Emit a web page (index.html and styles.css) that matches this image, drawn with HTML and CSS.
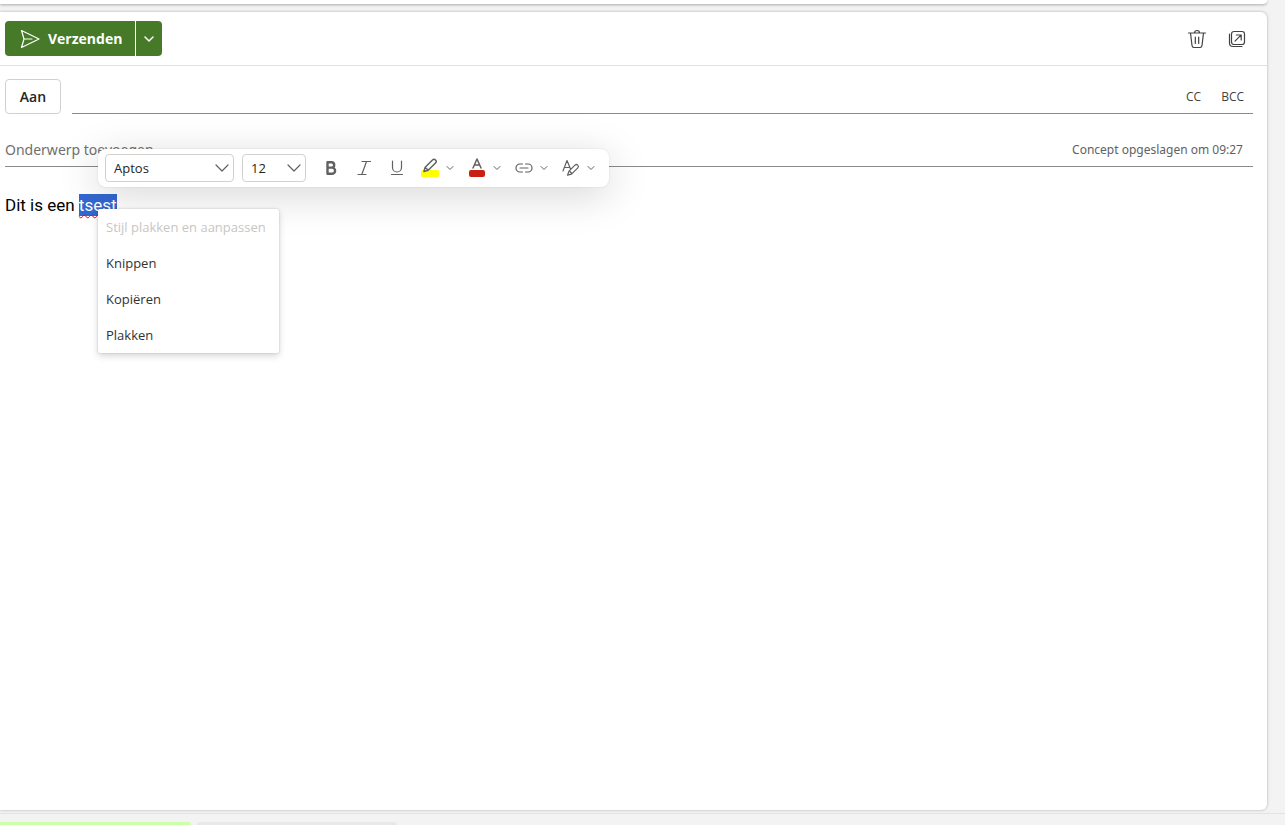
FILE: index.html
```html
<!DOCTYPE html>
<html lang="nl">
  <head>
    <meta charset="UTF-8" />
    <meta name="viewport" content="width=device-width, initial-scale=1.0" />
    <title>Nieuw bericht</title>
    <link rel="stylesheet" href="styles.css">
  </head>
  <body>
    <!-- bottom edge of the ribbon -->
    <div class="ribbon"></div>

    <main class="compose">
      <header class="compose-header">
        <div class="send-group">
          <button type="button" class="send">
            <svg width="20" height="20" viewBox="0 0 20 20"><path d="M1.500 1.500 19 10 1.500 18.500 4 10ZM4.500 10H12" /></svg>
            Verzenden
          </button>
          <button type="button" class="send-more" aria-label="Meer verzendopties">
            <svg width="10" height="10" viewBox="0 0 10 10"><path d="m1 3 4 4 4-4" /></svg>
          </button>
        </div>
        <div class="header-actions">
          <button type="button" class="icon-button" aria-label="Verwijderen">
            <svg width="20" height="20" viewBox="0 0 20 20"><path d="M1.500 4H18.500M7.500 4a2.500 2.500 0 0 1 5 0M3.500 4 5 16.500Q5.200 18.500 7 18.500H13Q14.800 18.500 15 16.500L16.500 4M8.300 8V14.500M11.700 8V14.500" /></svg>
          </button>
          <button type="button" class="icon-button" aria-label="Openen in nieuw venster">
            <svg width="20" height="20" viewBox="0 0 20 20"><rect x="4.500" y="2.500" width="13" height="13" rx="2.500" /><path d="M2.500 5V14a3.500 3.500 0 0 0 3.500 3.500H15M8 12.200 14 6.200M9.300 6H14.200V11" /></svg>
          </button>
        </div>
      </header>

      <div class="to-row">
        <button type="button" class="to-button">Aan</button>
        <div class="to-field">
          <input type="text" aria-label="Aan" />
          <button type="button">CC</button>
          <button type="button">BCC</button>
        </div>
      </div>

      <div class="subject-row">
        <input type="text" placeholder="Onderwerp toevoegen" aria-label="Onderwerp toevoegen" />
        <span>Concept opgeslagen om 09:27</span>
      </div>

      <div class="message">
        <p>Dit is een <span class="selected">tsest</span></p>
      </div>

      <!-- floating format bar -->
      <div class="format-bar">
        <div class="dropdown font-name">
          <select aria-label="Lettertype"><option>Aptos</option></select>
          <svg width="14" height="14" viewBox="0 0 14 14"><path d="m1 4 6 6 6-6" /></svg>
        </div>
        <div class="dropdown font-size">
          <select aria-label="Tekengrootte"><option>12</option></select>
          <svg width="14" height="14" viewBox="0 0 14 14"><path d="m1 4 6 6 6-6" /></svg>
        </div>
        <div class="format-buttons">
          <button type="button" aria-label="Vet">
            <svg class="bold" width="20" height="20" viewBox="0 0 20 20"><path d="M6.500 4.200H10.500a2.700 2.700 0 0 1 0 5.400H6.500ZM6.500 9.600H11a3.100 3.100 0 0 1 0 6.200H6.500Z" /></svg>
          </button>
          <button type="button" aria-label="Cursief">
            <svg width="20" height="20" viewBox="0 0 20 20"><path d="M8 3.500H16.500M4 16.500H12M12.500 3.500 7.800 16.500" /></svg>
          </button>
          <button type="button" aria-label="Onderstrepen">
            <svg width="20" height="20" viewBox="0 0 20 20"><path d="M5.500 3V9.500a4.500 4.500 0 0 0 9 0V3M4.500 16.500H15.500" /></svg>
          </button>
          <button type="button" class="split" aria-label="Markeren">
            <svg width="20" height="20" viewBox="0 0 20 20"><path class="yellow" d="M3 12H17.500Q19 12 19 13.500V17.500Q19 19 17.500 19H2.500Q1 19 1 17.500V14Q1 12 3 12Z" /><path class="pen" d="M4 13 5.200 9.300 12.500 2a2 2 0 0 1 3 3L8.200 12.200 4 13.500ZM5.300 9.500 8 12" /></svg>
            <svg class="chevron" width="8" height="8" viewBox="0 0 8 8"><path d="m1 2.500 3 3 3-3" /></svg>
          </button>
          <button type="button" class="split" aria-label="Tekstkleur">
            <svg width="20" height="20" viewBox="0 0 20 20"><rect class="red" x="2" y="12" width="16" height="7" rx="2" /><path class="pen" d="M6 10 10 1 14 10M7.300 7H12.700" /></svg>
            <svg class="chevron" width="8" height="8" viewBox="0 0 8 8"><path d="m1 2.500 3 3 3-3" /></svg>
          </button>
          <button type="button" class="split" aria-label="Koppeling">
            <svg width="20" height="20" viewBox="0 0 20 20"><path d="M8.500 6H6a4 4 0 0 0 0 8H8.500M11.500 6H14a4 4 0 0 1 0 8H11.500M6 10H14" /></svg>
            <svg class="chevron" width="8" height="8" viewBox="0 0 8 8"><path d="m1 2.500 3 3 3-3" /></svg>
          </button>
          <button type="button" class="split" aria-label="Stijlen">
            <svg width="20" height="20" viewBox="0 0 20 20"><path d="M2 13 6 2.500 9.500 11M3.300 9.500H8.500M6.500 17.200 8 13.200 14 7.200a1.900 1.900 0 0 1 2.800 2.700L10.500 16.200 6.500 17.200M8.500 13 10.800 15.500" /></svg>
            <svg class="chevron" width="8" height="8" viewBox="0 0 8 8"><path d="m1 2.500 3 3 3-3" /></svg>
          </button>
        </div>
      </div>

      <!-- context menu -->
      <div class="context-menu" role="menu">
        <button type="button" role="menuitem" disabled>Stijl plakken en aanpassen</button>
        <button type="button" role="menuitem">Knippen</button>
        <button type="button" role="menuitem">Kopiëren</button>
        <button type="button" role="menuitem">Plakken</button>
      </div>
    </main>

    <footer class="tabs">
      <div class="tab active"></div>
      <div class="tab"></div>
    </footer>
  </body>
</html>
```
FILE: styles.css
```css
* {
  box-sizing: border-box;
}

body {
  margin: 0;
  height: 100vh;
  display: flex;
  flex-direction: column;
  overflow: hidden;
  background: #f3f3f3;
  color: #242424;
  font-family: "Open Sans", "Noto Sans", sans-serif;
  font-size: 13px;
}

button,
input,
select {
  font: inherit;
  color: inherit;
  background: none;
  border: none;
  padding: 0;
  margin: 0;
  outline: none;
}

svg {
  display: block;
  flex: none;
  fill: none;
  stroke: currentColor;
  stroke-width: 1.2;
  stroke-linecap: round;
  stroke-linejoin: round;
}

.ribbon {
  height: 4px;
  flex: none;
  margin-right: 18px;
  background: #fff;
  border-radius: 0 0 6px 0;
  box-shadow: 0 1px 3px rgba(0, 0, 0, 0.3);
}

.compose {
  position: relative;
  flex: 1;
  margin: 8px 18px 3px 0;
  background: #fff;
  border-radius: 0 6px 6px 0;
  box-shadow: 0 0 3px rgba(0, 0, 0, 0.3);
}

.compose-header {
  display: flex;
  align-items: center;
  justify-content: space-between;
  height: 54px;
  padding: 0 20px 0 5px;
  border-bottom: 1px solid #e0e0e0;
}

.send-group {
  display: flex;
  height: 35px;
  color: #fff;
}

.send {
  display: flex;
  align-items: center;
  gap: 8px;
  padding: 0 13px 0 15px;
  background: #477a28;
  border-radius: 4px 0 0 4px;
  font-size: 14px;
  font-weight: bold;
}

.send-more {
  padding: 0 8px;
  background: #477a28;
  border-left: 1px solid #fff;
  border-radius: 0 4px 4px 0;
}

.send-more svg {
  stroke-width: 1.5;
}

.header-actions {
  display: flex;
  gap: 20px;
  color: #424242;
}

.to-row {
  display: flex;
  gap: 11px;
  margin: 13px 14px 0 5px;
}

.to-button {
  width: 56px;
  height: 35px;
  border: 1px solid #d1d1d1;
  border-radius: 4px;
  font-size: 14px;
  font-weight: 600;
}

.to-field {
  flex: 1;
  display: flex;
  align-items: center;
  gap: 20px;
  padding-right: 9px;
  border-bottom: 1px solid #8a8a8a;
  color: #424242;
  font-size: 12px;
}

.to-field input,
.subject-row input {
  flex: 1;
}

.subject-row {
  display: flex;
  align-items: center;
  height: 35px;
  margin: 18px 14px 0 5px;
  padding-right: 10px;
  border-bottom: 1px solid #8a8a8a;
  color: #616161;
  font-family: "Noto Sans", "Open Sans", sans-serif;
  font-size: 12px;
}

.subject-row input {
  font-size: 14px;
}

.subject-row input::placeholder {
  color: #707070;
  opacity: 1;
}

.message {
  padding: 27px 5px;
  color: #000;
  font-family: Roboto, sans-serif;
  font-size: 17px;
  line-height: 22px;
}

.message p {
  margin: 0;
}

.selected {
  display: inline-block;
  background: #3367d1;
  color: #fff;
  text-decoration: underline wavy #e00b1c 1px;
  text-underline-offset: 3px;
}

.format-bar {
  position: absolute;
  z-index: 1;
  top: 137px;
  left: 98px;
  display: flex;
  align-items: center;
  gap: 8px;
  height: 38px;
  padding: 0 8px 0 7px;
  background: #fff;
  border-radius: 8px;
  box-shadow: 0 0 2px rgba(0, 0, 0, 0.12), 0 8px 40px rgba(0, 0, 0, 0.17);
  color: #616161;
}

.dropdown {
  display: grid;
  align-items: center;
  height: 28px;
  border: 1px solid #d1d1d1;
  border-radius: 4px;
}

.dropdown select,
.dropdown svg {
  grid-area: 1 / 1;
}

.dropdown select {
  appearance: none;
  padding-left: 8px;
  color: #242424;
}

.dropdown svg {
  justify-self: end;
  margin-right: 4px;
  pointer-events: none;
}

.font-name {
  width: 129px;
}

.font-size {
  width: 64px;
}

.format-buttons {
  display: flex;
}

.format-buttons button {
  display: flex;
  align-items: center;
  justify-content: center;
  width: 33px;
  height: 28px;
}

.format-buttons .split {
  width: 47px;
  gap: 6px;
}

.format-buttons .chevron {
  stroke-width: 1;
}

.format-buttons .bold {
  stroke-width: 2.4;
}

.pen {
  stroke-width: 1.5;
}

.yellow {
  fill: #ff0;
  stroke: none;
}

.red {
  fill: #c92014;
  stroke: none;
}

.context-menu {
  position: absolute;
  z-index: 2;
  top: 197px;
  left: 98px;
  display: flex;
  flex-direction: column;
  width: 181px;
  background: #fff;
  border-radius: 2px;
  box-shadow: 0 0 2px rgba(0, 0, 0, 0.2), 0 3px 7px rgba(0, 0, 0, 0.16);
  color: #323130;
}

.context-menu button {
  height: 36px;
  padding: 0 8px;
  text-align: left;
  white-space: nowrap;
}

.context-menu button:disabled {
  color: #c8c6c4;
}

.tabs {
  display: flex;
  flex: none;
  gap: 6px;
  height: 12px;
  padding-top: 8px;
  border-top: 1px solid #e3e3e3;
}

.tab {
  width: 200px;
  background: #e8e8e8;
  border-radius: 4px 4px 0 0;
}

.tab.active {
  width: 191px;
  border-radius: 0 4px 0 0;
  background: #cbffa8;
}
```
